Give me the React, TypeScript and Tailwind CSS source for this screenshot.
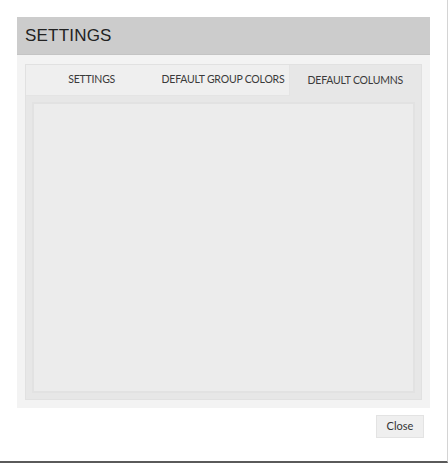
export default function App() {
  const tabs = ["SETTINGS", "DEFAULT GROUP COLORS", "DEFAULT COLUMNS"];
  const active = 2;

  return (
    <div className="w-[448px] h-[463px] bg-white border-r border-r-[#d4d4d4] border-b-2 border-b-[#5a5a5a] pt-[17px] pl-[17px] pr-[17px] font-['Lato',sans-serif]">
      <div className="flex flex-col">
        <div className="h-[38px] bg-[#cccccc] flex items-center px-[8px] border-b border-[#c4c4c4]">
          <h1 className="text-[17px] text-[#222] font-['Liberation_Sans',Arial,sans-serif] tracking-[0.2px]">
            SETTINGS
          </h1>
        </div>
        <div className="h-[353px] bg-[#f3f3f3] px-[8px] pt-[9px] pb-[8px]">
          <div className="h-full bg-[#e7e7e7] border border-[#e1e1e1] flex flex-col">
            <div className="h-[31px] flex">
              {tabs.map((t, i) => (
                <div
                  key={t}
                  className={`basis-0 grow min-w-0 flex items-center justify-center whitespace-nowrap text-[10.5px] tracking-[-0.2px] text-[#3a3a3a] ${
                    i === active
                      ? "bg-[#e7e7e7]"
                      : i === active - 1
                        ? "bg-[#efefef] border-r border-b border-[#e4e4e4]"
                        : "bg-[#efefef] border-b border-[#e4e4e4]"
                  }`}
                >
                  {t}
                </div>
              ))}
            </div>
            <div className="flex-1 px-[6px] pt-[6px] pb-[6px]">
              <div className="h-full bg-[#ececec] border-2 border-[#e2e2e2]" />
            </div>
          </div>
        </div>
        <div className="flex justify-end pt-[7px] pr-[6px]">
          <button className="w-[48px] h-[23px] bg-[#efefef] border border-[#e3e3e3] text-[11px] text-[#333]">
            Close
          </button>
        </div>
      </div>
    </div>
  );
}
